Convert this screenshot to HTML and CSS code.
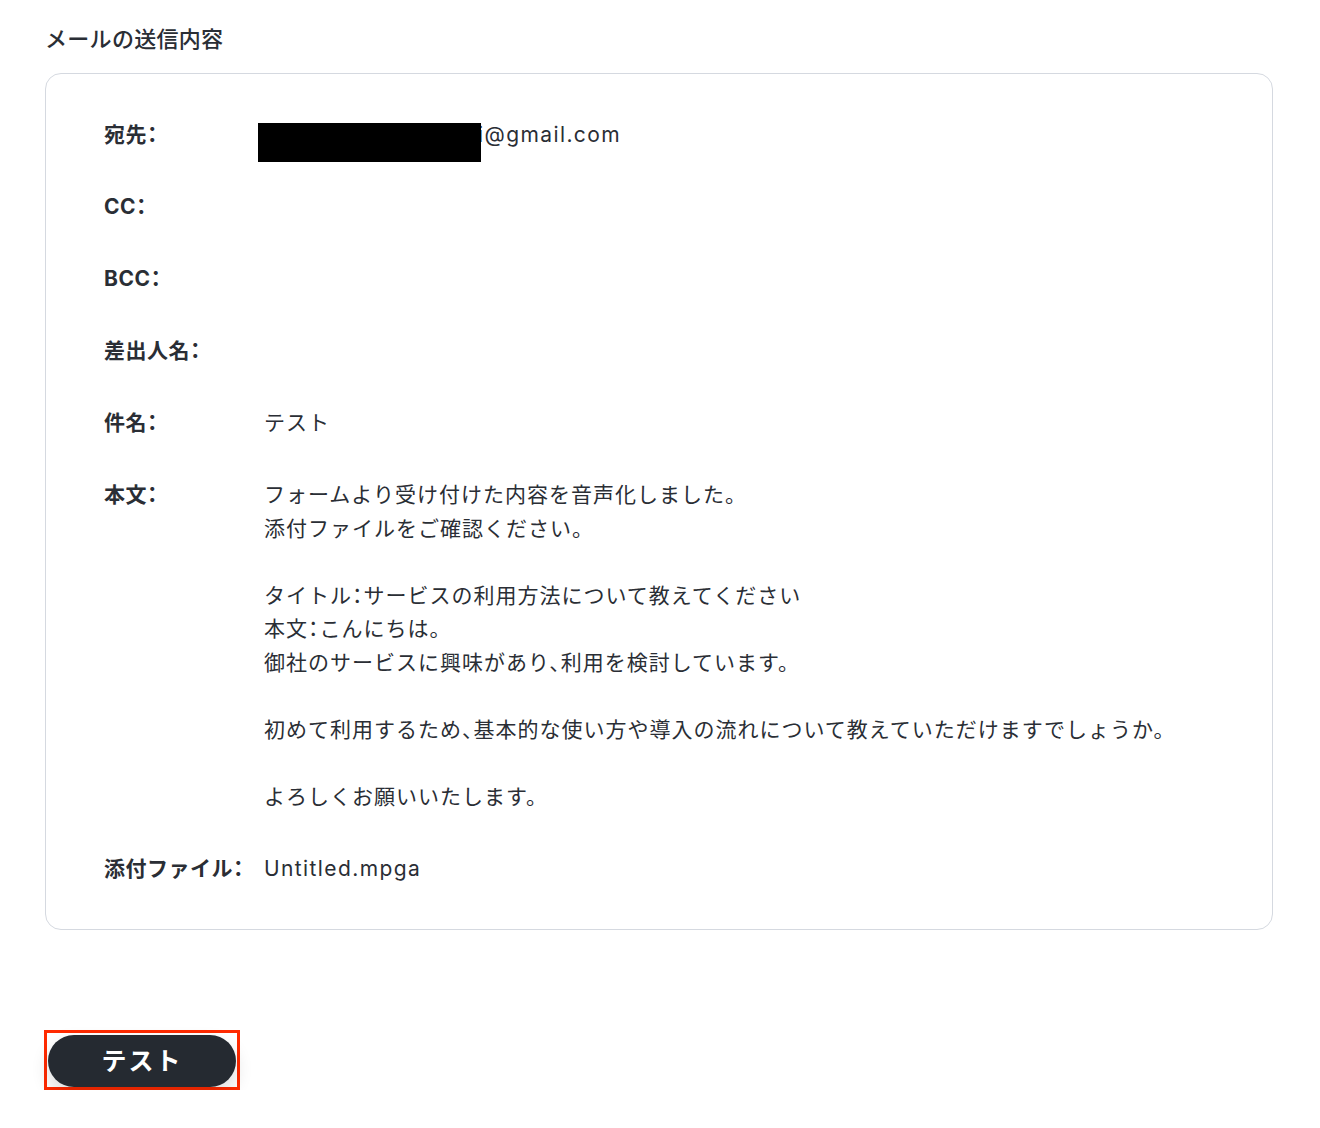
FILE: index.html
```html
<!DOCTYPE html>
<html lang="ja">
<head>
<meta charset="utf-8">
<link rel="stylesheet" href="styles.css">
</head>
<body>
<div class="page">
  <h2 class="title">メールの送信内容</h2>
  <div class="card">
    <div class="row">
      <div class="label">宛先：</div>
      <div class="value email latin"><span class="redact"></span>i@gmail.com</div>
    </div>
    <div class="row">
      <div class="label">CC：</div>
      <div class="value"></div>
    </div>
    <div class="row">
      <div class="label">BCC：</div>
      <div class="value"></div>
    </div>
    <div class="row">
      <div class="label">差出人名：</div>
      <div class="value"></div>
    </div>
    <div class="row">
      <div class="label">件名：</div>
      <div class="value">テスト</div>
    </div>
    <div class="row">
      <div class="label">本文：</div>
      <div class="value">フォームより受け付けた内容を音声化しました。<br>添付ファイルをご確認ください。<br><br>タイトル：サービスの利用方法について教えてください<br>本文：こんにちは。<br>御社のサービスに興味があり、利用を検討しています。<br><br>初めて利用するため、基本的な使い方や導入の流れについて教えていただけますでしょうか。<br><br>よろしくお願いいたします。</div>
    </div>
    <div class="row">
      <div class="label">添付ファイル：</div>
      <div class="value latin">Untitled.mpga</div>
    </div>
  </div>
  <div class="actions">
    <div class="highlight">
      <button class="btn">テスト</button>
    </div>
  </div>
</div>
</body>
</html>
```
FILE: styles.css
```css
html, body {
  margin: 0;
  padding: 0;
  background: #ffffff;
}
body {
  font-family: Inter, "Noto Sans CJK JP", "Noto Sans", sans-serif;
  color: #2a2e35;
  font-feature-settings: "halt";
}
.page {
  width: 1228px;
  padding: 26px 0 0 45px;
}
.title {
  margin: 0 0 20px 0;
  font-size: 22px;
  font-weight: 500;
  letter-spacing: 0.3px;
  line-height: 27px;
  color: #2a2e35;
}
.card {
  border: 1px solid #d5d9e0;
  border-radius: 16px;
  padding: 44px 58px 43px 58px;
  display: flex;
  flex-direction: column;
  gap: 38.4px;
}
.row {
  display: flex;
  font-size: 21px;
  line-height: 33.6px;
  min-height: 33.6px;
  letter-spacing: 1px;
}
.label {
  width: 160px;
  flex: none;
  font-weight: 700;
  letter-spacing: 0.5px;
  color: #2a2e35;
}
.value {
  flex: 1;
  font-weight: 400;
}
.latin {
  letter-spacing: 1.4px;
}
.email {
  position: relative;
  padding-left: 214px;
}
.redact {
  position: absolute;
  left: -6px;
  top: 5px;
  width: 223px;
  height: 39px;
  background: #000;
}
.actions {
  padding-top: 100px;
  margin-left: -1px;
}
.highlight {
  display: inline-block;
  border: 3px solid #ff2a00;
  padding: 2px 1px 0 1px;
  line-height: 0;
}
.btn {
  width: 188px;
  height: 52px;
  border: none;
  border-radius: 26px;
  background: #252a31;
  color: #ffffff;
  font-family: Inter, "Noto Sans CJK JP", sans-serif;
  font-size: 25px;
  font-weight: 700;
  letter-spacing: 2px;
  padding: 0 0 3px 0;
  box-shadow: 0 8px 18px rgba(0, 0, 0, 0.14);
  cursor: pointer;
}
```
